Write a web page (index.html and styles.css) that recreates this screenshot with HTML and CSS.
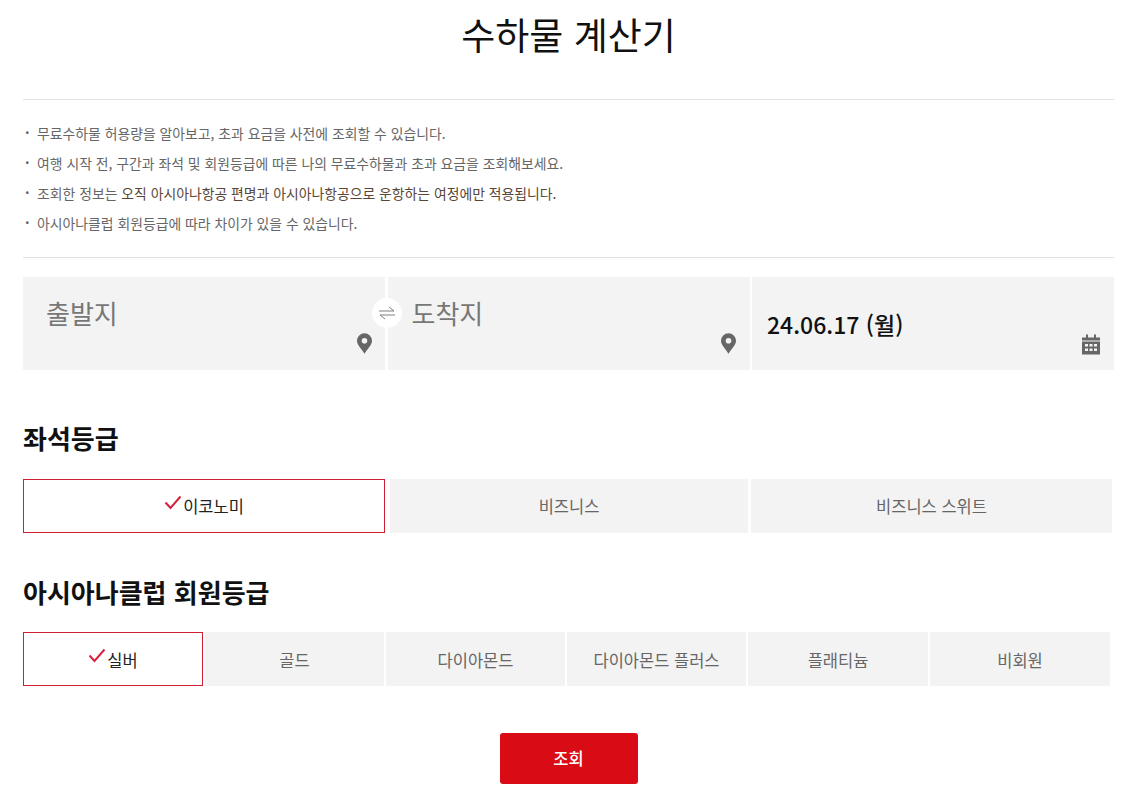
FILE: index.html
```html
<!DOCTYPE html>
<html lang="ko">
<head>
<meta charset="utf-8">
<title>수하물 계산기</title>
<link rel="stylesheet" href="styles.css">
</head>
<body>
<main class="page">
  <h1 class="title">수하물 계산기</h1>
  <ul class="notes">
    <li>무료수하물 허용량을 알아보고, 초과 요금을 사전에 조회할 수 있습니다.</li>
    <li>여행 시작 전, 구간과 좌석 및 회원등급에 따른 나의 무료수하물과 초과 요금을 조회해보세요.</li>
    <li>조회한 정보는 <span class="accent">오직 아시아나항공 편명과 아시아나항공으로 운항하는 여정에만 적용됩니다.</span></li>
    <li>아시아나클럽 회원등급에 따라 차이가 있을 수 있습니다.</li>
  </ul>
  <section class="route">
    <div class="cell">
      <span class="place">출발지</span>
      <svg class="pin" viewBox="0 0 16 22"><path fill-rule="evenodd" d="M8 0a8 8 0 0 0-8 8c0 5 5.500 9 8 14 2.500-5 8-9 8-14a8 8 0 0 0-8-8zm0 5a3 3 0 1 1 0 6 3 3 0 0 1 0-6z"/></svg>
    </div>
    <div class="cell">
      <span class="place">도착지</span>
      <svg class="pin pin-to" viewBox="0 0 16 22"><path fill-rule="evenodd" d="M8 0a8 8 0 0 0-8 8c0 5 5.500 9 8 14 2.500-5 8-9 8-14a8 8 0 0 0-8-8zm0 5a3 3 0 1 1 0 6 3 3 0 0 1 0-6z"/></svg>
    </div>
    <div class="cell">
      <span class="date">24.06.17 (월)</span>
      <svg class="cal" viewBox="0 0 18 20"><path fill-rule="evenodd" d="M4 0h2v3h6V0h2v3h4v3H0V3h4zM0 7h18v13H0zm3 2.500v2.500h3V9.500zm4.500 0v2.500h3V9.500zm4.500 0v2.500h3V9.500zM3 14v2.500h3V14zm4.500 0v2.500h3V14zm4.500 0v2.500h3V14z"/></svg>
    </div>
    <div class="swap">
      <svg viewBox="0 0 16 14"><path d="M0 5h15L10 1M16 9H1l5 4" fill="none" stroke="#808080" stroke-width="1"/></svg>
    </div>
  </section>
  <h2 class="heading">좌석등급</h2>
  <div class="options seats">
    <div class="opt on"><svg class="check" viewBox="0 0 18 15"><path d="M1.500 7.500l5 5.500L16.500 1.500" fill="none" stroke="#d8203f" stroke-width="2"/></svg>이코노미</div>
    <div class="opt">비즈니스</div>
    <div class="opt">비즈니스 스위트</div>
  </div>
  <h2 class="heading second">아시아나클럽 회원등급</h2>
  <div class="options tiers">
    <div class="opt on"><svg class="check" viewBox="0 0 18 15"><path d="M1.500 7.500l5 5.500L16.500 1.500" fill="none" stroke="#d8203f" stroke-width="2"/></svg>실버</div>
    <div class="opt">골드</div>
    <div class="opt">다이아몬드</div>
    <div class="opt">다이아몬드 플러스</div>
    <div class="opt wide">플래티늄</div>
    <div class="opt wide">비회원</div>
  </div>
  <div class="actions"><button class="search" type="button">조회</button></div>
</main>
</body>
</html>
```
FILE: styles.css
```css
* { box-sizing: border-box; }
html, body { margin: 0; background: #fff; }
body { font-family: "Noto Sans CJK KR", "Noto Sans", sans-serif; color: #111; height: 800px; overflow: hidden; }
.page { padding: 0 27px 0 23px; }
.title { margin: 0; height: 100px; border-bottom: 1px solid #e2e2e2; padding-top: 7px; font-size: 37px; font-weight: 400; line-height: 54px; text-align: center; color: #111; }
.notes { list-style: none; margin: 0; padding: 17.500px 0; height: 158px; border-bottom: 1px solid #e2e2e2; font-size: 13.870px; line-height: 30.300px; color: #666; }
.notes li { position: relative; padding-left: 14px; white-space: nowrap; }
.notes li::before { content: "·"; position: absolute; left: 2px; top: -1px; font-weight: 700; }
.accent { color: #5a4636; }
.route { position: relative; display: grid; grid-template-columns: 362px 362px 362px; column-gap: 2.500px; margin-top: 19px; height: 93px; }
.cell { position: relative; background: #f3f3f3; }
.place { position: absolute; left: 23px; top: 16px; font-size: 26px; line-height: 40px; color: #777; }
.cell:nth-child(2) .place { left: 24px; }
.date { position: absolute; left: 15px; top: 31px; font-size: 23px; line-height: 32px; font-weight: 500; color: #111; }
.pin { position: absolute; right: 13px; top: 55px; width: 15px; height: 23px; fill: #666; }
.pin-to { right: 14px; }
.cal { position: absolute; right: 14px; top: 57px; width: 18px; height: 21px; fill: #666; }
.swap { position: absolute; left: 349px; top: 21px; width: 30px; height: 30px; border-radius: 50%; background: #fff; display: flex; align-items: center; justify-content: center; }
.swap svg { width: 16px; height: 14px; }
.heading { margin: 50px 0 0; font-size: 26px; line-height: 36px; font-weight: 700; color: #111; height: 36px; white-space: nowrap; }
.heading.second { margin-top: 41px; }
.options { display: flex; }
.seats { margin-top: 23px; height: 54px; gap: 3px; }
.seats .opt { flex: 0 0 358px; }
.seats .opt.on { flex-basis: 362px; margin-right: 2px; }
.seats .opt:last-child { flex-basis: 361px; }
.tiers { margin-top: 22px; height: 54px; gap: 2px; }
.tiers .opt { flex: 0 0 179px; padding-top: 1px; }
.tiers .opt.on, .tiers .opt.wide { flex-basis: 180px; }
.opt { display: flex; align-items: center; justify-content: center; background: #f3f3f3; color: #666; font-size: 16.500px; white-space: nowrap; }
.opt.on { background: #fff; border: 1px solid #d0202f; color: #222; }
.check { width: 18px; height: 15px; margin: -8px 1px 0 0; }
.actions { display: flex; justify-content: center; margin-top: 47px; }
.search { width: 138px; height: 51px; border: 0; padding: 0 0 2px; border-radius: 3px; background: #d90b15; color: #fff; font: 500 16.500px "Noto Sans CJK KR", sans-serif; }
```
